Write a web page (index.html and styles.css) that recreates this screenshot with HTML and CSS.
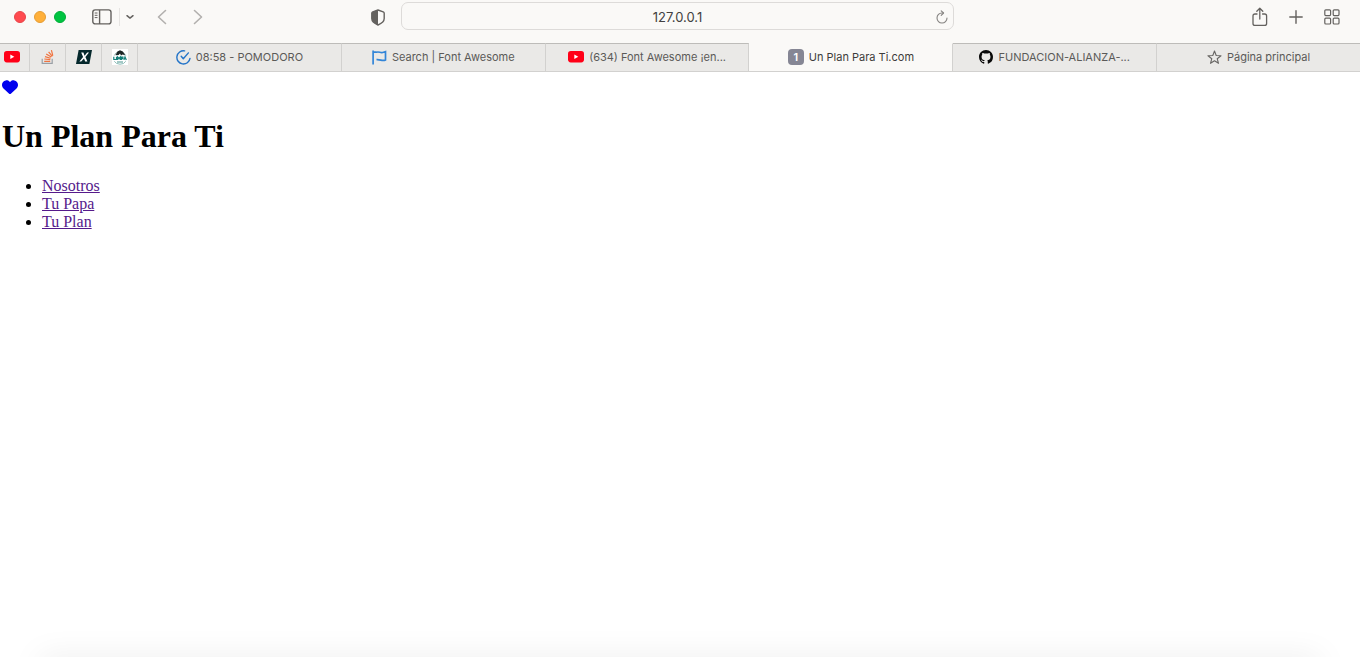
FILE: index.html
```html
<!DOCTYPE html>
<html lang="es">
<head>
<meta charset="utf-8">
<meta name="viewport" content="width=device-width, initial-scale=1">
<title>Un Plan Para Ti.com</title>
<link rel="stylesheet" href="styles.css">
</head>
<body>
<header class="toolbar">
  <div class="tools-left">
    <div class="lights">
      <button class="light red" aria-label="Cerrar"></button>
      <button class="light amber" aria-label="Minimizar"></button>
      <button class="light green" aria-label="Ampliar"></button>
    </div>
    <button class="icon-btn sidebar" aria-label="Barra lateral">
      <svg width="20" height="16" viewBox="0 0 20 16" fill="none" stroke="#64625f" stroke-width="1.4"><rect x=".8" y=".9" width="18.2" height="14" rx="2.4"/><path d="M7.6 1v14"/><path d="M2.7 4h2.8M2.7 6.3h2.8M2.7 8.6h2.8" stroke-width="1"/></svg>
    </button>
    <button class="icon-btn groups" aria-label="Grupos de pestañas">
      <svg width="8" height="6" viewBox="0 0 8 6" fill="none" stroke="#64625f" stroke-width="1.5" stroke-linecap="round" stroke-linejoin="round"><path d="M1 1.7 4 4.1 7 1.7"/></svg>
    </button>
    <button class="icon-btn back" aria-label="Atrás">
      <svg width="10" height="16" viewBox="0 0 10 16" fill="none" stroke="#b2b0ae" stroke-width="1.6" stroke-linecap="round" stroke-linejoin="round"><path d="M8.5 1.5 1.5 8l7 6.5"/></svg>
    </button>
    <button class="icon-btn forward" aria-label="Adelante">
      <svg width="10" height="16" viewBox="0 0 10 16" fill="none" stroke="#b2b0ae" stroke-width="1.6" stroke-linecap="round" stroke-linejoin="round"><path d="M1.5 1.5 8.5 8l-7 6.5"/></svg>
    </button>
    <button class="icon-btn shield" aria-label="Informe de privacidad">
      <svg width="14" height="17" viewBox="0 0 14 17"><path d="M7 1 12.2 2.8Q13.2 3.2 13.2 4.3V9.6C13.2 12.6 10 14.8 7 16 4 14.8.8 12.6.8 9.6V4.3Q.8 3.2 1.8 2.8Z" fill="none" stroke="#64625f" stroke-width="1.4" stroke-linejoin="round"/><path d="M7 1 1.8 2.8Q.8 3.2.8 4.3V9.6C.8 12.6 4 14.8 7 16Z" fill="#64625f"/></svg>
    </button>
  </div>
  <div class="address">
    <input class="address-input" type="text" value="127.0.0.1" aria-label="Dirección">
    <button class="icon-btn reload" aria-label="Recargar">
      <svg width="12" height="14" viewBox="0 0 12 14" fill="none" stroke="#858381" stroke-width="1.1" stroke-linecap="round" stroke-linejoin="round"><path d="M11 8A5 5 0 1 1 6 3h1.2"/><path d="M5.2.8 7.6 3 5.2 5.4"/></svg>
    </button>
  </div>
  <div class="tools-right">
    <button class="icon-btn" aria-label="Compartir">
      <svg width="16" height="20" viewBox="0 0 16 20" fill="none" stroke="#64625f" stroke-width="1.3" stroke-linecap="round" stroke-linejoin="round"><path d="M5 7H3Q1 7 1 9v7.4q0 2 2 2h9.6q2 0 2-2V9q0-2-2-2h-2"/><path d="M7.8 12V1.4M4.8 4.3l3-3 3 3"/></svg>
    </button>
    <button class="icon-btn" aria-label="Nueva pestaña">
      <svg width="14" height="14" viewBox="0 0 14 14" fill="none" stroke="#64625f" stroke-width="1.4" stroke-linecap="round"><path d="M7 .8v12.4M.8 7h12.4"/></svg>
    </button>
    <button class="icon-btn" aria-label="Vista de pestañas">
      <svg width="16" height="16" viewBox="0 0 16 16" fill="none" stroke="#64625f" stroke-width="1.2"><rect x=".8" y=".8" width="5.8" height="5.8" rx="1"/><rect x="9.2" y=".8" width="5.8" height="5.8" rx="1"/><rect x=".8" y="9.2" width="5.8" height="5.8" rx="1"/><rect x="9.2" y="9.2" width="5.8" height="5.8" rx="1"/></svg>
    </button>
  </div>
</header>

<nav class="tabs" aria-label="Pestañas">
  <button class="tab pinned first" aria-label="YouTube">
    <svg width="16" height="12" viewBox="0 0 16 12"><rect width="16" height="11.4" rx="2.8" fill="#ff0017"/><path d="M6.3 3.4v4.6l4-2.3z" fill="#fff"/></svg>
  </button>
  <button class="tab pinned" aria-label="Stack Overflow">
    <svg width="14" height="16" viewBox="0 0 14 16" fill="none" stroke-width="1.2"><path d="M1.2 9.8v4.6h10V9.8" stroke="#9a9fa5"/><path d="M3.2 12.3h6M3.3 10l6 .7M4 7.6l5.6 1.7M5.2 5l5.1 3.1M7.6 2.8l3.7 4.6M10.4 1.1l1.4 5.6" stroke="#f0733f"/></svg>
  </button>
  <button class="tab pinned" aria-label="X">
    <svg width="16" height="14" viewBox="0 0 16 14"><path d="M2.6 0H16l-2.6 14H0z" fill="#05282c"/><path d="M5.2 2.5h2.2L8.6 5.7 11.2 2.5h1.8L9.4 7l2 4.5H9.2L8 8.4l-2.8 3.1H3.4L7.1 7z" fill="#fff"/></svg>
  </button>
  <button class="tab pinned" aria-label="UMMA">
    <svg width="16" height="16" viewBox="0 0 16 16"><path d="M0 0h16v16H0z" fill="#fff"/><path d="M2.4 6.4A6 5.6 0 0 1 13.6 6.4" fill="none" stroke="#7b9c9a"/><path d="M3.6 6.2 5.4 2.6 8 1.2l2.8 1.4 2.4 3.6-2.7-.8L9 6.4 8 4.5 6.6 6z" fill="#1d2525"/><path d="M1.8 7.8v2.7h2.7V7.8M5.7 10.9V8l1.3 1.5L8.3 8v2.9M9.4 10.9V8.2h1.5v1.5H9.6M12 10.9l1-3 1.3 3" fill="none" stroke="#137e78" stroke-width="1.2"/><path d="M2.3 12.3Q4 15.1 8 15.2t5.7-2.9" fill="none" stroke="#8bbcb7"/><path d="M5 13h6" stroke="#46928c"/></svg>
  </button>
  <button class="tab">
    <svg width="15" height="15" viewBox="0 0 15 15" fill="none" stroke="#2374c8" stroke-width="1.4" stroke-linecap="round" stroke-linejoin="round"><path d="M8.6.9A6.6 6.6 0 1 0 14 8.4"/><path d="M5.2 6.2 7.3 8.7 12.4 2.9"/></svg>
    <span>08:58 - POMODORO</span>
  </button>
  <button class="tab">
    <svg width="15" height="15" viewBox="0 0 15 15" fill="none" stroke="#3285d8" stroke-width="1.7"><path d="M1.1.6v13.8"/><path d="M1.2 2.2h3.3c2.6-.9 3.8.9 6.2.3l2.8-.8v8.2c-3.3 1.8-5-.9-9-.3"/></svg>
    <span>Search | Font Awesome</span>
  </button>
  <button class="tab">
    <svg width="16" height="12" viewBox="0 0 16 12"><rect width="16" height="11.4" rx="2.8" fill="#ff0017"/><path d="M6.3 3.4v4.6l4-2.3z" fill="#fff"/></svg>
    <span>(634) Font Awesome ¡en...</span>
  </button>
  <button class="tab active" aria-current="page">
    <span class="badge">1</span>
    <span>Un Plan Para Ti.com</span>
  </button>
  <button class="tab">
    <svg width="14" height="14" viewBox="0 0 16 16"><path fill="#090909" d="M8 0C3.58 0 0 3.58 0 8c0 3.54 2.29 6.53 5.47 7.59.4.07.55-.17.55-.38 0-.19-.01-.82-.01-1.49-2.01.37-2.53-.49-2.69-.94-.09-.23-.48-.94-.82-1.13-.28-.15-.68-.52-.01-.53.63-.01 1.08.58 1.23.82.72 1.21 1.87.87 2.33.66.07-.52.28-.87.51-1.07-1.78-.2-3.64-.89-3.64-3.95 0-.87.31-1.59.82-2.15-.08-.2-.36-1.02.08-2.12 0 0 .67-.21 2.2.82.64-.18 1.32-.27 2-.27s1.36.09 2 .27c1.53-1.04 2.2-.82 2.2-.82.44 1.1.16 1.92.08 2.12.51.56.82 1.27.82 2.15 0 3.07-1.87 3.75-3.65 3.95.29.25.54.73.54 1.48 0 1.07-.01 1.93-.01 2.2 0 .21.15.46.55.38A8.01 8.01 0 0 0 16 8c0-4.42-3.58-8-8-8"/></svg>
    <span>FUNDACION-ALIANZA-...</span>
  </button>
  <button class="tab last">
    <svg width="15" height="15" viewBox="0 0 15 15" fill="none" stroke="#676563" stroke-width="1.1" stroke-linejoin="round"><path d="M7.5 1 9.2 5.5 14 5.7 10.2 8.7 11.5 13.3 7.5 10.7 3.5 13.3 4.8 8.7 1 5.7 5.8 5.5Z"/></svg>
    <span>Página principal</span>
  </button>
</nav>

<main class="page">
  <a class="heart" href="#" aria-label="Favorito"><svg width="16" height="16" viewBox="0 0 512 512"><path fill="currentColor" d="M47.6 300.4 228.3 469.1c7.5 7 17.4 10.9 27.7 10.9s20.2-3.9 27.7-10.9L464.4 300.4c30.4-28.3 47.6-68 47.6-109.5v-5.8c0-69.9-50.5-129.5-119.4-141C347 36.5 300.6 51.4 268 84L256 96 244 84C211.4 51.4 165 36.5 119.4 44.1 50.5 55.6 0 115.2 0 185.1v5.8c0 41.5 17.2 81.2 47.6 109.5z"/></svg></a>
  <h1 class="title">Un Plan Para Ti</h1>
  <ul class="menu">
    <li><a class="menu-link" href="#nosotros">Nosotros</a></li>
    <li><a class="menu-link" href="#papa">Tu Papa</a></li>
    <li><a class="menu-link" href="#plan">Tu Plan</a></li>
  </ul>
</main>
</body>
</html>
```

FILE: styles.css
```css
* {
  box-sizing: border-box;
}

body {
  margin: 0;
  min-height: 100vh;
  display: flex;
  flex-direction: column;
  background: #fff;
  font-family: "Liberation Serif", "Times New Roman", serif;
  font-size: 16px;
}

svg {
  display: block;
  flex: none;
}

button {
  margin: 0;
  padding: 0;
  border: 0;
  background: none;
  font-family: Inter, "Liberation Sans", sans-serif;
}

/* Toolbar */
.toolbar {
  display: grid;
  grid-template-columns: minmax(0, 1fr) minmax(200px, 553px) minmax(0, 1fr);
  padding: 2px 5px 13px 0;
  background: #faf9f7;
}

.tools-left,
.tools-right {
  display: flex;
  align-items: center;
}

.tools-left {
  padding: 2px 16px 0 14px;
}

.tools-right {
  justify-content: flex-end;
  gap: 21px;
  padding: 1px 15px 0 0;
}

.lights {
  display: flex;
  gap: 8px;
}

.light {
  width: 12px;
  height: 12px;
  border-radius: 50%;
}

.red {
  background: #ff4b4f;
  border: 1px solid #e8454a;
}

.amber {
  background: #ffb03a;
  border: 1px solid #e59d35;
}

.green {
  background: #00c441;
  border: 1px solid #00ad38;
}

.sidebar {
  margin-left: 26px;
}

.groups {
  display: flex;
  align-items: center;
  height: 18px;
  margin-left: 7px;
  padding-left: 6px;
  border-left: 1px solid #e6e4e2;
}

.back {
  margin-left: 23px;
}

.forward {
  margin-left: 26px;
}

.shield {
  margin-left: auto;
}

.address {
  display: flex;
  align-items: center;
  height: 28px;
  padding: 1px 5px 0 17px;
  border: 1px solid #dddbd9;
  border-radius: 7px;
}

.address-input {
  flex: 1;
  min-width: 0;
  padding: 0;
  border: 0;
  outline: 0;
  background: none;
  color: #424140;
  font-family: Inter, "Liberation Sans", sans-serif;
  font-size: 13px;
  text-align: center;
}

/* Tab strip */
.tabs {
  display: flex;
  height: 29px;
}

.tab {
  display: flex;
  flex: 1 1 0;
  align-items: center;
  justify-content: center;
  gap: 5px;
  min-width: 0;
  overflow: hidden;
  padding-bottom: 1px;
  border: 1px solid #d2d1cf;
  border-top-color: #bdbcb9;
  border-left: 0;
  background: #eae9e7;
  color: #5b5a58;
  font-size: 11px;
  white-space: nowrap;
}

.pinned {
  flex: 0 0 36px;
}

.first {
  flex-basis: 30px;
  padding-right: 5px;
}

.last {
  border-right: 0;
}

.active {
  border-top-color: #faf9f7;
  background: #faf9f7;
  color: #3d3c3b;
}

.badge {
  width: 16px;
  border-radius: 4px;
  background: #858694;
  color: #fff;
  font-weight: 600;
  line-height: 16px;
}

/* Page */
.page {
  position: relative;
  flex: 1;
  overflow: hidden;
  padding: 7px 2px;
}

.page::after {
  content: "";
  position: absolute;
  right: 40px;
  bottom: -14px;
  left: 40px;
  height: 10px;
  box-shadow: 0 0 32px rgba(0, 0, 0, 0.15);
}

.heart {
  display: block;
  height: 18px;
  color: #0000ee;
}

.title {
  margin: 21px 0 22px;
  font-size: 32px;
  line-height: 37px;
}

.menu {
  margin: 0;
  padding-left: 40px;
  line-height: 18px;
}

.menu-link {
  color: #551a8b;
}
```
